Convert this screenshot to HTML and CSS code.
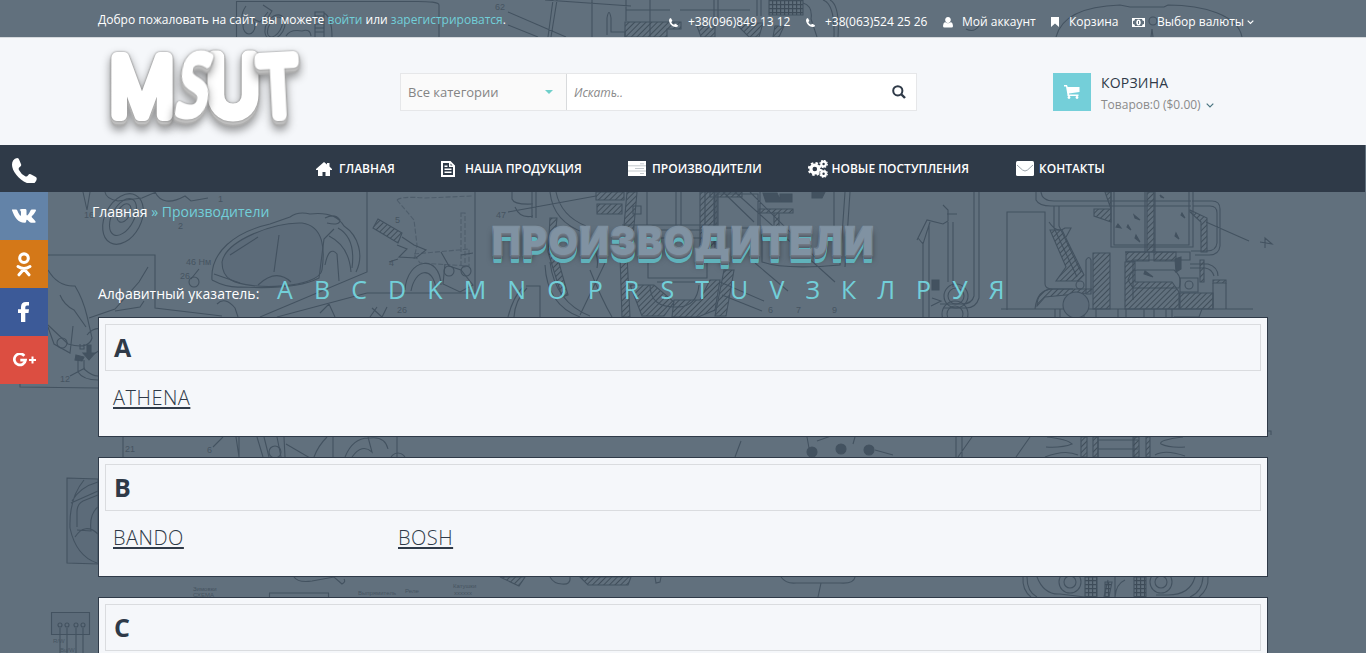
FILE: index.html
```html
<!DOCTYPE html>
<html lang="ru">
<head>
<meta charset="utf-8">
<title>Производители</title>
<link rel="stylesheet" href="styles.css">
</head>
<body>
<svg class="blueprint" width="1366" height="653" viewBox="0 0 1366 653" aria-hidden="true">
  <defs>
    <pattern id="hatch" width="4" height="4" patternUnits="userSpaceOnUse" patternTransform="rotate(45)"><path d="M0 0V4" stroke="#35434f" stroke-width="1.9"/></pattern>
    <pattern id="mesh" width="4" height="4" patternUnits="userSpaceOnUse"><path d="M0 0H4M0 0V4" stroke="#35434f" stroke-width="2.4"/></pattern>
  </defs>
  <g class="ink">
    <!-- top strip -->
    <path d="M236.500 37V1.500H412Q439 1 439 5V37M246 6Q239 16 244 25M263 5l9 6-5 8M268 12l-8 10-7-3"/>
    <ellipse cx="249" cy="26" rx="6" ry="8"/><ellipse cx="275" cy="27" rx="6" ry="11" transform="rotate(30 275 27)"/><ellipse cx="275" cy="27" rx="9" ry="13" transform="rotate(30 275 27)"/>
    <path d="M286 36Q290 29 302 31Q310 28 311 36M315 37V12h9v25M315 16h9m-9 4h9m-9 4h9m-9 4h9m-9 4h9M324 13q8 4 8 24"/>
    <path d="M557 0l-6 37M553 0l-5 37M545 0l86 6M508 12l58 25M508 25l30 12M592 0v37M626 0v21m24-21v37M714 0v24m4-24v24M757 0v16m4-16v16M626 10h44m10 0h70M607 35V18q2-11 4 0v14h14v5"/>
    <path class="hatch" d="M625 22h56v7h-14v8h-42zM697 26h18v11h-14zM775 26h9l-5 11h-6zM735 23h28l-4 14h-10z"/><path class="mesh" d="M769 0h34v15h-34z"/>
    <path d="M803 3q10 3 8 16l6 18M823 0q12 4 11 37M830 0q10 5 8 37M1056 37C1062 14 1090 6 1120 5l10 2h34l4-2c35 0 70 10 74 32M1151 37l1-8 1 8M966 29q8 4 13-3"/><circle cx="1153" cy="21" r="4"/>
    <!-- scooters, left -->
    <path d="M105 192q1 7 13 9l24-3 14-6M155 192q8 16 30 4l6 5 17-3M83 192l4 18 3-18M48 255H155v53l67 8M48 270q10 17 27 16 8 13 12 30l5 22q-3 12-24 6L48 325M60 295q4 10 14 15l12 17M89 318l26-9 24-27 9-15M115 311l25-4 4-6M87 335q8-10 19-5l-3 18-9 6M48 327l6 17 16 9 3-27M80 344v5h4v-5M78 357v15q5 8 20 8M84 360v9q8 7 14 7M70 376l15-8M20 382v5l78 1"/>
    <ellipse cx="123" cy="219" rx="18" ry="27" transform="rotate(28 123 219)"/><ellipse cx="123" cy="217" rx="11" ry="20" transform="rotate(28 123 217)"/><ellipse cx="124" cy="213" rx="6" ry="10" transform="rotate(28 124 213)"/><circle cx="62" cy="343" r="5"/>
    <path class="solid" d="M87 345h4v8h4l-6 7-6-7h4zM76 355l8 2-2 4-7-1z"/>
    <path class="tint" d="M222 262C226 240 275 222 302 223C324 226 325 250 322 270C319 288 250 291 231 280Q222 275 222 262Z"/>
    <path d="M212 280C210 252 235 232 270 224l20-7q8-6 20-3 25-3 34 12c15 10 20 30 12 46M212 280q15 8 29 7 55 3 78-9l5-39 10-10M214 274l26 9M230 255l28-18M279 235l-5 37M258 285q18-17 33-3M325 265q4-20 12-11l2 27M338 228q18 10 14 40M329 236q20 10 22 36M325 218q10-5 15 2 0 6-13 3M367 192v80l-107 45M367 293H475V192M367 293l-90 24M217 304q8-8 18 4l3 9M320 313l9-9 6 13M191 279l8-10"/>
    <circle cx="194" cy="282" r="5"/>
    <path class="hatch" d="M378 219l24 14-4 10-25-15z"/><path class="faint" d="M397 200q4-4 28-2l47-2M397 200l17 20 3 25-3 14M461 213h4v54h-4zM414 254l55-5v17l-49-3z"/>
    <path d="M402 237l12 8 12 5-10 8-17-1 8-8-10-4M398 259l-9 3M405 290c2-32 35-37 36-5M411 291c4-22 22-26 25-2M441 252l8 14 12 4 12 15-13 7-17-8 2-20M461 255l12-2M372 308l10 9 5-10M370 317l7-10"/><circle cx="449" cy="271" r="5"/><circle cx="466" cy="271" r="5"/>
    <!-- carburettor, centre -->
    <path d="M512 192v7q2 6 21 5M515 207q5 12 18 9M532 192v26M536 192v26M550 192q3 30 35 41 15 20 12 35M556 192q5 24 30 34M508 212l88-16M526 286h14v31M523 287q-10 10-15 30M527 288q-12 12-13 29M545 265q2 40 35 52M550 262q5 40 40 54M590 270q12 30 22 47M580 315l25-52"/>
    <path class="hatch" d="M596 192h28v8h-28zM597 204h25v10h-25zM627 192h10l-5 56h-10zM700 192h15v70h-15zM710 192h32v5h-32zM620 255h7l3 62h-8zM630 285h24l20 17-10 14h-22zM674 300h26l10-20h10l-5 30-17 7h-26zM759 209h34v4h-34zM774 213h5v15h-5zM550 218h7l-3 27 14 50-6 2-14-45zM714 192h3v52h-3zM724 270h10l-8 46h-11z"/>
    <path d="M647 192v33h29v-33M681 192v33h24v-33M633 206h8v8h-8zM622 225h95M640 230h65v8h-65zM648 255v23h59v-23M650 285q0 23 27 22 20 0 22-22M657 282h43M718 194h40v34h-40zM760 192v34M762 262v-33M834 192v35M723 192l31 30M735 192l100 90M750 192l70 70M845 192l-5 73q-55 5-78-3v-22M850 192l-5 75M755 263l33 28M720 282l44 19M722 295l40 16"/>
    <path class="solid" d="M763 193h14l4 9h-15zM780 194h12v8h-12zM812 192h13l-3 6h-10z"/>
    <!-- pump, right -->
    <path d="M918 238l-1 2 10-20 16 4 5-3v-11l-5-5M947 214h10M923 242v75M929 225v92M948 222v60M953 222v65M918 238l5 6 7-22M974 192v104q-2 8-12 8h-22M979 192v106q-3 10-13 10h-22M932 298l9 3-10 5"/>
    <path class="solid" d="M932 280h7v10h-7z"/><circle cx="956" cy="296" r="12"/><circle cx="956" cy="296" r="8"/><circle cx="955" cy="314" r="13"/><circle cx="955" cy="314" r="8"/>
    <path d="M1001 309h252M1007 310V212h38v72q0 5 8 5h20M1036 192v8q3 6 15 6h60M1041 192q1 9 13 9h57M1049 222q8 12 16 6h6l-5 9M1054 206v22l23 49M1059 206v20l22 46M1035 309q2-20 18-20M1111 192v55h82v-55M1114 192v53h75v-53M1111 201h80M1111 206h80M1145 192v60M1155 192v60M1192 201h20q8 0 8 8v37q-1 9-11 9h-14M1193 206h17q7 0 7 7v30q-1 8-10 8h-16M1206 222l43 19M1125 252h65v8h-57v40M1190 264h18q10 3 10 12M1190 268h15q7 1 9 8M1260 242l12 2-7-6v10M1128 280q3-10 9-10h37q9 7 5 18h-46z"/>
    <path class="hatch" d="M1050 230h12l22 45-6 6h-22l10-14zM1093 253h17v56h-17zM1126 252h23v9h-23zM1154 252h22v9h-22zM1125 262h10v20h37l7 10v17h-54zM1105 192h6v30l-17-6v-7h17zM1147 192h7v60h-7zM1190 210l17 8v34h-6v-30l-11-10zM1050 289h42l-5 4-42 4-8 9q0-14 13-17zM1180 293h33v16h-33zM1213 283h13v-3h-13zM1200 260h4v22h-4z"/>
    <path d="M1086 260q3-5 5 0v34h-5zM1180 278h18v14h-18zM1213 283v25M1226 283v26M1055 309v8m5-8v8m24-8v8m12-8v8m22-8v8m8-8v8m18-8v8m10-8v8m12-8v8m6-8v8m30-8l-3 8h-25"/><circle cx="1080" cy="285" r="4"/><circle cx="1189" cy="285" r="4"/><circle class="tint" cx="1076" cy="305" r="13"/>
    <path class="solid" d="M1118 224l3 4-5-1zM1134 215l6 5-5-2zM1128 225l3 5-4-3zM1160 195l4 3-3-1zM1182 213l3 5-4-3zM1176 233l3 6-4-3zM1136 235l4 7-5-4zM1145 271l8 6-9-3zM1175 259l6-2v12l-5 3z"/>
    <!-- parts between and beside the cards -->
    <path d="M123 437v20M236 437l3 20M239 437v20M257 437l6 20M264 437l5 20M277 437l4 20M284 437l1 20M286 444l24 14M327 437q-9 9-13 20M397 437v20M213 447l10-10M345 457q8-20 25-19 15-2 18 11M352 457q10-14 20-5l-4-15M333 437v20"/><circle cx="275" cy="452" r="6"/><circle cx="398" cy="461" r="8"/>
    <path d="M741 441l-6 16M807 437l2 11m8-7l14-5M855 437l-2 7m22 6l18 5"/><g class="solid"><circle cx="812" cy="452" r="5"/><circle cx="841" cy="449" r="5"/><circle cx="869" cy="450" r="5"/></g>
    <path d="M956 437v20M962 437v20M972 437l-14 20M1030 437l-14 20M1047 437q20 2 25 7-10 4-26 3M1045 457q20-8 33-2M1183 437q-25 3-22 7 8 4 24 3M1185 456q-20-7-30-1M1098 437v20M1134 437v20M1098 440h40M1098 449h40M1268 431h3v4"/><path class="hatch" d="M1081 437h6v20h-6zM1093 437h5v20h-5zM1133 437h6v20h-6zM1146 437h4v20h-4z"/>
    <path class="tint" d="M67 478l31 1v85l-31-1z"/><path d="M84 480Q69 498 70 528q6 28 27 35M71 503l27-12M72 501Q80 487 98 482M77 527V512q0-8 6-11l15-6M77 530l14 1q-2-17 7-24M75 537q10-15 23-3"/>
    <path class="tint" d="M51.500 612.500h38v22h-38z"/><g><circle cx="60" cy="625" r="2"/><circle cx="67" cy="625" r="2"/><circle cx="76" cy="625" r="2"/><circle cx="83" cy="625" r="2"/></g><path d="M60 628v25M67 628v25M76 628v25M83 628v25M269.500 597v-4h59v4M294 577q4 6 18 4l22-4 8 7q4-2 2-5M781 577q5 7 15 6h44q14 1 15-6M821 583l-3 14"/>
    <path class="hatch" d="M500 577h25l-6 9zM580 577h51l-3 8h-40z"/><path d="M550 577q4 7 12 7 9 1 8-7M655 577l1 6 4-1 1-5"/>
    <path d="M1023 577q-1 13 8 20M1027 577q0 15 10 20M1037 577q7 18 23 17l25 3M1208 577q1 12-9 20M1203 577q-1 15-13 20M1195 577q-5 18-27 18h-12M1115 577v20M1125 580q-9 4-10 17M1108 580l-4 17"/><g><circle cx="1070" cy="582" r="11"/><circle cx="1070" cy="582" r="6"/><circle cx="1161" cy="582" r="11"/><circle cx="1161" cy="582" r="6"/></g><path class="mesh" d="M1085 577h12v20h-12zM1134 577h12v20h-12zM1105 582h7l-3 15h-4z"/>
  </g>
  <g class="marks">
    <text x="84" y="218">16</text><text x="218" y="202">1</text><text x="178" y="229">2</text><text x="186" y="265">46 Нм</text><text x="180" y="279">26</text><text x="395" y="223">5</text><text x="389" y="266">4</text><text x="397" y="313">26</text><text x="60" y="382">12</text><text x="125" y="452">21</text><text x="207" y="453">6</text><text x="495" y="10">62</text><text x="496" y="218">47</text><text x="768" y="313">6</text><text x="796" y="313">7</text><text x="832" y="313">9</text>
    <g class="tiny"><text x="193" y="591">Зимовки</text><text x="193" y="597">СХЕМА</text><text x="358" y="595">Выпрямитель</text><text x="405" y="593">Реле</text><text x="453" y="588">Катушки</text><text x="454" y="595">хххххх</text><text x="53" y="643">R/W</text><text x="60" y="652">Bu/W</text></g>
  </g>
</svg>

<div class="topbar">
  <p class="welcome">Добро пожаловать на сайт, вы можете <a>войти</a> или <a>зарегистрироватся</a>.</p>
  <ul class="toplinks">
    <li class="tl-phone"><svg width="9" height="9" viewBox="0 0 24 24"><path d="M5 0l4 7-3 4q2 5 7 7l4-3 7 4q0 5-6 5C7 23 0 13 0 6Q0 1 5 0Z"/></svg>+38(096)849 13 12</li>
    <li class="tl-phone2"><svg width="9" height="9" viewBox="0 0 24 24"><path d="M5 0l4 7-3 4q2 5 7 7l4-3 7 4q0 5-6 5C7 23 0 13 0 6Q0 1 5 0Z"/></svg>+38(063)524 25 26</li>
    <li class="tl-user"><svg width="10" height="11" viewBox="0 0 10 11"><path d="M5 0c4 0 3.500 6 0 6S1 0 5 0ZM2 5q3 2.500 6 0 2 1 2 4 0 1.500-1.500 1.500h-7Q0 10.500 0 9q0-3 2-4Z"/></svg>Мой аккаунт</li>
    <li class="tl-cart"><svg width="8" height="10" viewBox="0 0 8 10"><path d="M0 0h8v10L4 6.500 0 10Z"/></svg>Корзина</li>
    <li class="tl-money"><svg width="13" height="9" viewBox="0 0 13 9"><path fill-rule="evenodd" d="M0 0h13v9H0ZM3 1Q3 3 1 3v3q2 0 2 2h7q0-2 2-2V3q-2 0-2-2ZM6.500 1.500c3 0 3 6 0 6s-3-6 0-6ZM6 3v3h1V3Z"/></svg><span>Выбор валюты</span><svg class="caret" width="7" height="5" viewBox="0 0 7 5"><path d="M.7.7l2.800 2.800L6.300.7" fill="none" stroke="#fff" stroke-width="1.200"/></svg></li>
  </ul>
</div>

<header class="header">
  <svg class="logo" width="210" height="106" viewBox="98 38 210 106" role="img" aria-label="MSUT">
    <g class="logo-text">
      <text class="logo-m" transform="translate(110 115)" textLength="64" lengthAdjust="spacingAndGlyphs">M</text>
      <text class="logo-u" transform="translate(207 114)" textLength="52" lengthAdjust="spacingAndGlyphs">U</text>
      <text class="logo-s" transform="translate(175 114) skewX(-9)" textLength="30" lengthAdjust="spacingAndGlyphs">S</text>
      <text class="logo-t" transform="translate(259 116) rotate(-3)" textLength="41" lengthAdjust="spacingAndGlyphs">T</text>
    </g>
  </svg>
  <div class="search">
    <div class="category">Все категории<span class="tri"></span></div>
    <div class="query"><span>Искать..</span>
      <svg width="14" height="14" viewBox="0 0 14 14"><circle cx="5.800" cy="5.800" r="4.600" fill="none" stroke="#2f3a48" stroke-width="2"/><path d="M9 9l4 4" stroke="#2f3a48" stroke-width="2.400"/></svg>
    </div>
  </div>
  <div class="cart">
    <span class="cart-icon"><svg width="16" height="14" viewBox="0 0 16 14"><path d="M0 0h3l.7 2H15.500v5L5 8.500V9.500h9.500V11H3.500L3.300 9 2 1.500H0Z"/><circle cx="5" cy="12.500" r="1.400"/><circle cx="13" cy="12.500" r="1.400"/></svg></span>
    <div><div class="cart-title">КОРЗИНА</div><div class="cart-sum">Товаров:0 ($0.00)<svg width="8" height="5" viewBox="0 0 8 5"><path d="M.7.7L4 4 7.300.7" fill="none" stroke="#4a7480" stroke-width="1.200"/></svg></div></div>
  </div>
</header>

<nav class="nav">
  <a class="n1"><svg width="16" height="14" viewBox="0 0 16 14"><path d="M8 0l3 2.500V1h2.500v3.500L16 7v1h-2v6H9.500v-4h-3v4H2V8H0V7Z"/></svg>ГЛАВНАЯ</a>
  <a class="n2"><svg width="14" height="16" viewBox="0 0 14 16"><path fill-rule="evenodd" d="M0 0h9.500L14 4.500V16H0ZM2 2v12h10V6H8V2ZM9.500 2.500V4.500H11.500ZM3.500 7.500h7V9h-7ZM3.500 10.500h7V12h-7ZM3.500 4.500h3V6h-3Z"/></svg>НАША ПРОДУКЦИЯ</a>
  <a class="n3"><svg width="18" height="15" viewBox="0 0 18 15"><path d="M0 0h18v15H0z"/><path d="M0 4.800h18M0 10h18" stroke="#aab1b8" stroke-width=".7"/><path d="M12 2.800h4M7 7.500h9M12 12.500h4" stroke="#b4bbc1" stroke-width=".8"/></svg>ПРОИЗВОДИТЕЛИ</a>
  <a class="n4"><svg width="20" height="18" viewBox="0 0 20 18"><g fill="none" stroke="#fff"><circle cx="6.800" cy="9" r="3.900" stroke-width="3.200"/><circle cx="6.800" cy="9" r="6" stroke-width="2" stroke-dasharray="2.500 2.210"/><circle cx="15.600" cy="4" r="2.300" stroke-width="2.200"/><circle cx="15.600" cy="4" r="3.700" stroke-width="1.200" stroke-dasharray="1.600 1.300"/><circle cx="15.600" cy="13.700" r="2.300" stroke-width="2.200"/><circle cx="15.600" cy="13.700" r="3.700" stroke-width="1.200" stroke-dasharray="1.600 1.300"/></g></svg>НОВЫЕ ПОСТУПЛЕНИЯ</a>
  <a class="n5"><svg width="18" height="15" viewBox="0 0 18 15"><rect width="18" height="15" rx="1.500"/><path d="M1 4l5.500 5Q9 11 11.500 9L17 4" fill="none" stroke="#8e98a1" stroke-width=".9"/></svg>КОНТАКТЫ</a>
</nav>

<aside class="social">
  <a class="call"><svg width="25" height="25" viewBox="0 0 24 24"><path d="M5 0Q6.500 0 7 2l1.700 4q.6 1.500-1 2.500-2 1.300-1 3 2 4 6 6 1.500.8 2.800-1 1-1.500 2.500-.8l4.500 2.300q1.500.8 1.200 2.500-.7 4.500-6.200 4.500C8 23 0 13 0 6.500Q0 1 5 0Z"/></svg></a>
  <a class="vk"><svg width="24" height="14" viewBox="0 0 24 14"><path d="M0 .5h4q1 0 1.300 1 1.200 3.300 2.700 5 1 .8 1-.8V3q0-1.700-1.500-2Q8.500 0 10 0h3.500q1 0 1 1.500v4q.3 1.500 1.300.5Q17.500 4 18.500 1.500q.4-1 1.400-1h3.300q1.200 0 .6 1.400Q22.500 4.500 20 7q-.7.700 0 1.400 2.200 2.100 3.500 4 .6 1.300-.8 1.300h-3.500q-1 0-1.700-.8L15.500 11q-1.200-.7-1.200.8 0 2-1.300 2C6 14 3 9 0 1.300Z"/></svg></a>
  <a class="ok"><svg width="16" height="25" viewBox="0 0 16 25"><g fill="none" stroke="#fff" stroke-linecap="round"><circle cx="8" cy="6.200" r="4.300" stroke-width="3.100"/><path d="M2 14.500q6 4 12 0M8 17l-5 5.800M8 17l5 5.800" stroke-width="3"/></g></svg></a>
  <a class="fb"><svg width="12" height="20" viewBox="0 0 12 20"><path d="M3 20V11H0V7.300H3V5Q3 0 8 0h3v3.600H9Q7.300 3.600 7.300 5.200V7.300H11L10.500 11H7.300v9Z"/></svg></a>
  <a class="gp"><svg width="23" height="14" viewBox="0 0 23 14"><path d="M11.300 2.800A5.600 5.600 0 1 0 12.500 7.200H7.300" fill="none" stroke="#fff" stroke-width="2.700"/><path d="M16 7h7M19.500 3.500v7" stroke="#fff" stroke-width="2"/></svg></a>
</aside>

<main class="content">
  <div class="crumbs"><a>Главная</a> » Производители</div>
  <h1>ПРОИЗВОДИТЕЛИ</h1>
  <div class="index"><span class="index-label">Алфавитный указатель:</span><a>A</a><a>B</a><a>C</a><a>D</a><a>K</a><a>M</a><a>N</a><a>O</a><a>P</a><a>R</a><a>S</a><a>T</a><a>U</a><a>V</a><a>З</a><a>К</a><a>Л</a><a>Р</a><a>У</a><a>Я</a></div>
  <section class="card"><h2>A</h2><div class="brands"><a>ATHENA</a></div></section>
  <section class="card"><h2>B</h2><div class="brands"><a>BANDO</a><a>BOSH</a></div></section>
  <section class="card last"><h2>C</h2></section>
</main>
</body>
</html>
```
FILE: styles.css
```css
* { box-sizing: border-box; }
html, body { height: 653px; overflow: hidden; }
body { margin: 0; position: relative; background: #61707d; font-family: "Open Sans", "Noto Sans", sans-serif; font-size: 14px; color: #fff; }
svg { display: block; fill: #fff; flex: none; }

.blueprint { position: absolute; inset: 0; z-index: -1; }
.ink { fill: none; stroke: #3b4a58; stroke-width: 1.1; opacity: .78; }
.ink .hatch { fill: url(#hatch); }
.ink .mesh { fill: url(#mesh); }
.ink .solid { fill: #3b4a58; }
.ink .tint { fill: #5b6a79; }
.ink .faint { stroke-dasharray: 5 2; opacity: .6; }
.marks { fill: #465461; font-size: 9px; font-family: "Liberation Sans", sans-serif; }
.tiny { font-size: 6px; }

.topbar { height: 37px; display: flex; justify-content: space-between; padding: 0 112px 0 98px; }
.welcome { margin: 0; font-size: 12px; line-height: 18px; padding-top: 11px; }
.welcome a { color: #72cfd9; }
.toplinks { list-style: none; margin: 0; padding: 13px 0 0; display: flex; font-size: 12px; line-height: 18px; height: 31px; }
.toplinks li { display: flex; align-items: center; white-space: nowrap; }
.toplinks .caret { margin-left: 3px; }
.tl-phone, .tl-phone2 { gap: 10px; }
.tl-phone { width: 137px; }
.tl-phone2 { width: 137px; }
.tl-user { width: 108px; gap: 9px; }
.tl-cart { width: 81px; gap: 10px; }
.tl-money span { margin-left: 12px; }

.header { height: 108px; background: #f5f7fa; border-top: 1px solid #d5d9dd; display: flex; padding: 0 0 0 98px; }
.logo { margin-right: 92px; }
.logo-text { font-family: Inter, sans-serif; font-size: 78px; fill: #fff; stroke: #fff; stroke-linejoin: round; }
.logo-text text { filter: drop-shadow(0 0 .8px #888) drop-shadow(0 3px 0 #c0c0c0) drop-shadow(0 2px 0 #aaa) drop-shadow(0 4px 4px rgba(0,0,0,.4)); }
.logo-m { font-weight: 300; stroke-width: 12px; }
.logo-u { font-weight: 300; stroke-width: 13px; }
.logo-s { font-family: "Open Sans", sans-serif; font-weight: 400; font-size: 82px; stroke-width: 9px; }
.logo-t { font-weight: 300; stroke-width: 12px; }
.search { display: flex; width: 517px; height: 38px; margin-top: 35px; border: 1px solid #e6e7e9; background: #fff; }
.category { width: 166px; display: flex; align-items: center; justify-content: space-between; padding: 0 13px 0 7px; border-right: 1px solid #d8dadc; background: #fafafa; color: #848484; font-size: 13px; }
.tri { border: 4px solid transparent; border-top-color: #6fcfca; border-bottom: 0; }
.query { flex: 1; display: flex; align-items: center; justify-content: space-between; padding: 0 10px 0 7px; color: #8a8a8a; font-size: 12px; font-style: italic; }
.cart { display: flex; gap: 10px; margin: 35px 0 0 136px; color: #2f3a48; }
.cart-icon { width: 38px; height: 38px; background: #74cfd9; display: flex; align-items: center; justify-content: center; }
.cart-title { font-size: 14px; line-height: 20px; font-weight: 500; letter-spacing: .2px; }
.cart-sum { font-size: 12px; line-height: 18px; padding-top: 3px; color: #8a8a8a; display: flex; align-items: center; gap: 5px; white-space: nowrap; }

.nav { height: 47px; background: #2f3a48; display: flex; padding-left: 316px; font-size: 12px; font-weight: 600; width: 1365px; }
.nav a { display: flex; align-items: center; white-space: nowrap; }
.n1 { width: 125px; gap: 7px; }
.n2 { width: 187px; gap: 10px; }
.n3 { width: 180px; gap: 6px; }
.n4 { width: 208px; gap: 3.5px; }
.n5 { gap: 5px; }

.social { position: absolute; left: 0; top: 145px; width: 48px; }
.social a { display: flex; height: 48px; align-items: center; justify-content: center; }
.social .call { height: 47px; padding-top: 3px; }
.vk { background: #6383a8; }
.ok { background: #d47818; }
.fb { background: #3c5a98; }
.gp { background: #dc4e41; }

.content { padding: 0 98px; height: 461px; overflow: hidden; }
.crumbs { margin-left: -6px; height: 32px; padding-top: 10px; line-height: 20px; color: #72cfd9; white-space: nowrap; }
.crumbs a { color: #fff; }
h1 { margin: 0; padding-left: 394px; height: 51px; line-height: 35px; font-family: Inter, sans-serif; font-weight: 900; font-size: 38px; letter-spacing: 1.5px; white-space: nowrap; color: #8092a2; -webkit-text-stroke: 2.5px #8092a2; stroke-linejoin: round; paint-order: stroke fill; text-shadow: 0 1px 0 #717985, 0 2px 0 #68717d, 0 3px 0 #606975, 0 4px 0 #555f6b, 0 6px 0 #60b2bb, 0 7px 0 #60b2bb, 0 8px 0 #60b2bb, 0 5px 6px rgba(0,0,0,.5); }
.index { display: flex; align-items: baseline; height: 42px; line-height: 28px; }
.index-label { width: 179px; font-size: 14px; white-space: nowrap; }
.index a { font-size: 25px; color: #72cfd9; margin-right: 21.1px; }
.card { width: 1170px; height: 120px; border: 1px solid #2f3a48; background: #f5f7fa; padding: 6px; margin-bottom: 20px; color: #2f3a48; }
.card.last { height: 56px; border-bottom: 0; padding-bottom: 0; margin-bottom: 0; }
h2 { margin: 0; height: 47px; border: 1px solid #dadcdf; padding-left: 8px; font-size: 25px; line-height: 44px; font-weight: 700; }
.brands { display: flex; padding: 11px 8px; }
.brands a { width: 285px; font-size: 20px; line-height: 32px; font-weight: 300; letter-spacing: .5px; text-decoration: underline; text-decoration-thickness: 2px; text-underline-offset: 2px; }
```
